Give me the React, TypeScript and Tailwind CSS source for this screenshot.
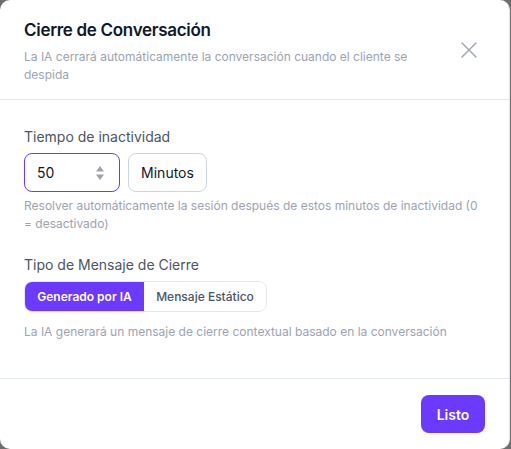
import React from "react";

export default function App() {
  return (
    <div className="w-[511px] h-[449px] bg-[#6e6e6e]" style={{ fontFamily: "Inter, 'Noto Sans', sans-serif" }}>
      <div className="w-[510px] h-[449px] bg-white rounded-[10px] border-r border-[#e5e7eb] flex flex-col">
        <div className="flex items-start justify-between pl-6 pr-[28px] pt-[18px] h-[100px] border-b border-[#e2e8f0]">
          <div className="flex flex-col">
            <h2 className="text-[17px] leading-[24px] font-semibold tracking-[-0.3px] text-[#111827]">Cierre de Conversación</h2>
            <p className="mt-[6px] text-[12px] leading-[17.5px] text-[#9ca3af] w-[400px]">
              La IA cerrará automáticamente la conversación cuando el cliente se despida
            </p>
          </div>
          <button className="mt-[20px] text-[#9ca3af]">
            <svg width="24" height="24" viewBox="0 0 24 24" fill="none" stroke="currentColor" strokeWidth="1.4" strokeLinecap="round">
              <path d="M5 5l14 14M19 5L5 19" />
            </svg>
          </button>
        </div>
        <div className="flex-1 px-6 pt-[27px]">
          <label className="block text-[14px] leading-[20px] text-[#4b5563]">Tiempo de inactividad</label>
          <div className="mt-[6px] flex gap-2">
            <div className="w-[96px] h-[39px] rounded-[8px] border border-[#6b39ff] flex items-center justify-between pl-[12px] pr-[14px]">
              <span className="text-[14px] text-[#111827]">50</span>
              <svg width="10" height="18" viewBox="0 0 10 18" fill="#9ca3af">
                <path d="M5 2 L9 7.5 H1 Z" />
                <path d="M5 16 L9 10.5 H1 Z" />
              </svg>
            </div>
            <div className="w-[79px] h-[39px] rounded-[8px] border border-[#cbd5e1] flex items-center justify-center">
              <span className="text-[14px] text-[#111827]">Minutos</span>
            </div>
          </div>
          <p className="mt-[5px] text-[12px] leading-[18px] text-[#9ca3af]">
            Resolver automáticamente la sesión después de estos minutos de inactividad (0 = desactivado)
          </p>
          <label className="block mt-[22px] text-[14px] leading-[20px] text-[#4b5563]">Tipo de Mensaje de Cierre</label>
          <div className="mt-[6px] inline-flex h-[31px] rounded-[8px] border border-[#e5e7eb] overflow-hidden">
            <button className="w-[119px] bg-[#6b39ff] text-white text-[12px] font-semibold">Generado por IA</button>
            <button className="w-[122px] bg-white text-[#4b5563] text-[12px] font-medium">Mensaje Estático</button>
          </div>
          <p className="mt-[11px] text-[12px] leading-[18px] text-[#9ca3af]">
            La IA generará un mensaje de cierre contextual basado en la conversación
          </p>
        </div>
        <div className="h-[71px] border-t border-[#e2e8f0] flex items-start justify-end pr-[24px] pt-[16px]">
          <button className="w-[64px] h-[38px] rounded-[8px] bg-[#6b39ff] text-white text-[14px] font-semibold">Listo</button>
        </div>
      </div>
    </div>
  );
}
